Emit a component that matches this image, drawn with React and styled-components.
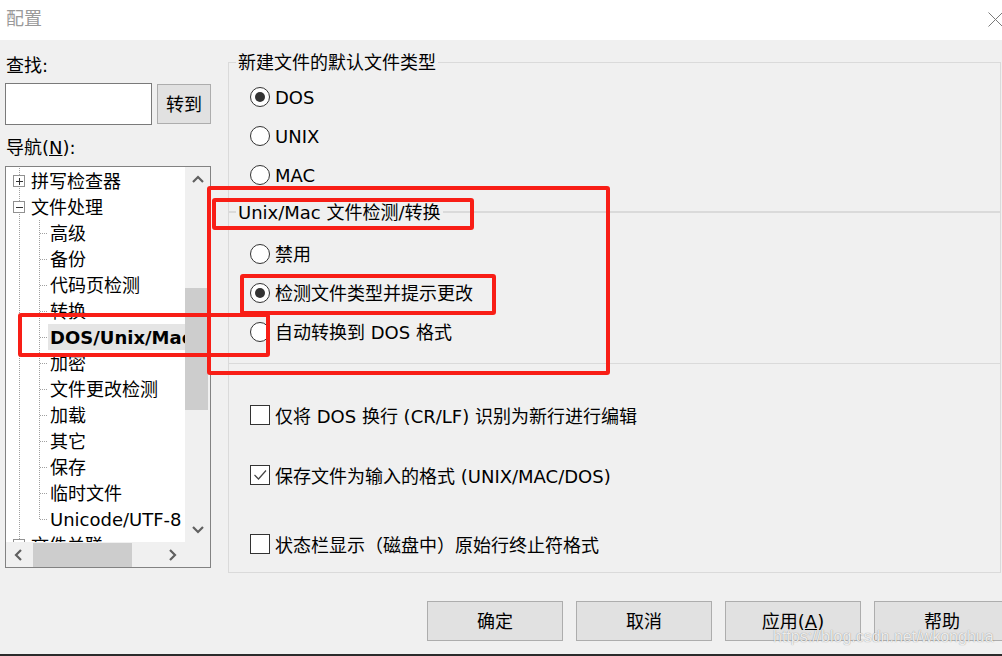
import React from 'react'
import styled, { createGlobalStyle } from 'styled-components'

const GlobalStyle = createGlobalStyle`
  html, body {
    margin: 0;
    padding: 0;
    background: #f0f0f0;
    overflow: hidden;
  }
  body {
    font-family: "DejaVu Sans", "Noto Sans CJK SC", sans-serif;
  }
`

const treeItems = [
    { label: '拼写检查器', level: 1, expander: '+' },
    { label: '文件处理', level: 1, expander: '-' },
    { label: '高级', level: 2 },
    { label: '备份', level: 2 },
    { label: '代码页检测', level: 2 },
    { label: '转换', level: 2 },
    { label: 'DOS/Unix/Mac', level: 2, selected: true },
    { label: '加密', level: 2 },
    { label: '文件更改检测', level: 2 },
    { label: '加载', level: 2 },
    { label: '其它', level: 2 },
    { label: '保存', level: 2 },
    { label: '临时文件', level: 2 },
    { label: 'Unicode/UTF-8', level: 2, last: true },
    { label: '文件关联', level: 1, expander: '+' },
]

const marks = [
    { x: 207, y: 186, w: 403, h: 189 },
    { x: 212, y: 198, w: 262, h: 32 },
    { x: 240, y: 274, w: 256, h: 41 },
    { x: 18, y: 313, w: 252, h: 44 },
]

function Chevron({ dir }) {
    const paths = {
        up: 'M1 7 L6 2 L11 7',
        down: 'M1 2 L6 7 L11 2',
        left: 'M7 1 L2 6 L7 11',
        right: 'M2 1 L7 6 L2 11',
    }
    const horiz = dir === 'left' || dir === 'right'
    return (
        <svg width={horiz ? 9 : 12} height={horiz ? 12 : 9} viewBox={horiz ? '0 0 9 12' : '0 0 12 9'}>
            <path d={paths[dir]} fill="none" stroke="#606060" strokeWidth="2.2" />
        </svg>
    )
}

function Guide({ level, last, expander }) {
    const dot = { stroke: '#a0a0a0', strokeWidth: 1, strokeDasharray: '1 1', shapeRendering: 'crispEdges' }
    if (level === 1) {
        return (
            <svg width="23" height="26" style={{ flexShrink: 0 }}>
                <line x1="13.5" y1="0" x2="13.5" y2="26" {...dot} />
                <rect x="7.5" y="7.5" width="11" height="11" fill="#fff" stroke="#919191" shapeRendering="crispEdges" />
                <line x1="10" y1="13.5" x2="17" y2="13.5" stroke="#333" shapeRendering="crispEdges" />
                {expander === '+' && (
                    <line x1="13.5" y1="10" x2="13.5" y2="17" stroke="#333" shapeRendering="crispEdges" />
                )}
            </svg>
        )
    }
    return (
        <svg width="42" height="26" style={{ flexShrink: 0 }}>
            <line x1="13.5" y1="0" x2="13.5" y2="26" {...dot} />
            <line x1="33.5" y1="0" x2="33.5" y2={last ? 13 : 26} {...dot} />
            <line x1="34" y1="13.5" x2="42" y2="13.5" {...dot} />
        </svg>
    )
}

function Radio({ checked, children }) {
    return (
        <OptionRow $h={39}>
            <RadioCircle>{checked && <RadioDot />}</RadioCircle>
            <OptionText>{children}</OptionText>
        </OptionRow>
    )
}

function Check({ checked, top, children }) {
    return (
        <OptionRow $h={30} $top={top}>
            <CheckBox>
                {checked && (
                    <svg width="18" height="18" viewBox="0 0 18 18">
                        <path d="M3.5 9 L7.5 13 L15 4.5" fill="none" stroke="#444" strokeWidth="1.2" />
                    </svg>
                )}
            </CheckBox>
            <OptionText>{children}</OptionText>
        </OptionRow>
    )
}

function App() {
    return (
        <Window>
            <GlobalStyle />
            <TitleBar>
                <span>配置</span>
                <svg width="15" height="15" viewBox="0 0 15 15">
                    <path d="M0.5 0.5 L14.5 14.5 M14.5 0.5 L0.5 14.5" stroke="#7a7a7a" strokeWidth="1" />
                </svg>
            </TitleBar>

            <Main>
                <LeftCol>
                    <FieldLabel>查找:</FieldLabel>
                    <SearchRow>
                        <SearchInput />
                        <Button $w={54} $h={40}>转到</Button>
                    </SearchRow>
                    <FieldLabel $top={9}>导航(<u>N</u>):</FieldLabel>

                    <Tree>
                        <TreeContent>
                            {treeItems.map((item) => (
                                <TreeRow key={item.label}>
                                    <Guide level={item.level} last={item.last} expander={item.expander} />
                                    <TreeLabel $selected={item.selected}>{item.label}</TreeLabel>
                                </TreeRow>
                            ))}
                        </TreeContent>
                        <VScroll>
                            <ArrowBox><Chevron dir="up" /></ArrowBox>
                            <VTrack>
                                <VThumb />
                            </VTrack>
                            <ArrowBox><Chevron dir="down" /></ArrowBox>
                        </VScroll>
                        <HScroll>
                            <ArrowBox><Chevron dir="left" /></ArrowBox>
                            <HTrack>
                                <HThumb />
                            </HTrack>
                            <ArrowBox><Chevron dir="right" /></ArrowBox>
                        </HScroll>
                        <Corner />
                    </Tree>
                </LeftCol>

                <Panel>
                    <Section $h={149} $pad={14} $bottom>
                        <Legend>新建文件的默认文件类型</Legend>
                        <Radio checked>DOS</Radio>
                        <Radio>UNIX</Radio>
                        <Radio>MAC</Radio>
                    </Section>
                    <Section $h={151} $pad={21} $topLine>
                        <Legend>Unix/Mac 文件检测/转换</Legend>
                        <Radio>禁用</Radio>
                        <Radio checked>检测文件类型并提示更改</Radio>
                        <Radio>自动转换到 DOS 格式</Radio>
                    </Section>
                    <Section $grow $topLine>
                        <Check top={36}>仅将 DOS 换行 (CR/LF) 识别为新行进行编辑</Check>
                        <Check checked top={30}>保存文件为输入的格式 (UNIX/MAC/DOS)</Check>
                        <Check top={39}>状态栏显示（磁盘中）原始行终止符格式</Check>
                    </Section>
                </Panel>
            </Main>

            <Footer>
                <Button $w={136} $h={40}>确定</Button>
                <Button $w={136} $h={40}>取消</Button>
                <Button $w={136} $h={40}>应用(<u>A</u>)</Button>
                <Button $w={136} $h={40}>帮助</Button>
            </Footer>
            <BottomEdge />

            <Watermark>https://blog.csdn.net/wkonghua</Watermark>
            {marks.map((m, i) => (
                <Mark key={i} $x={m.x} $y={m.y} $w={m.w} $h={m.h} />
            ))}
        </Window>
    )
}

const Window = styled.div`
    position: relative;
    width: 1002px;
    height: 656px;
    overflow: hidden;
    display: flex;
    flex-direction: column;
    background: #f0f0f0;
    color: #000;
    font-size: 18px;
    line-height: 24px;
`

const TitleBar = styled.div`
    height: 40px;
    flex-shrink: 0;
    box-sizing: border-box;
    background: #fff;
    display: flex;
    align-items: center;
    justify-content: space-between;
    padding: 0 0 2px 6px;
    color: #9a9a9a;
    svg {
        margin-right: -1px;
    }
`

const Main = styled.div`
    height: 540px;
    flex-shrink: 0;
    display: flex;
    align-items: flex-start;
`

const LeftCol = styled.div`
    width: 207px;
    margin-left: 5px;
    padding-top: 12px;
    display: flex;
    flex-direction: column;
`

const FieldLabel = styled.div`
    height: 24px;
    padding: 2px 0 0 1px;
    margin-top: ${p => p.$top || 0}px;
    white-space: nowrap;
`

const SearchRow = styled.div`
    margin-top: 5px;
    display: flex;
    align-items: center;
    gap: 5px;
`

const SearchInput = styled.div`
    width: 147px;
    height: 42px;
    box-sizing: border-box;
    background: #fff;
    border: 1px solid #7a7a7a;
`

const Button = styled.div`
    width: ${p => p.$w}px;
    height: ${p => p.$h}px;
    flex-shrink: 0;
    box-sizing: border-box;
    padding-top: 2px;
    background: #e1e1e1;
    border: 1px solid #adadad;
    display: flex;
    align-items: center;
    justify-content: center;
    white-space: nowrap;
`

const Tree = styled.div`
    margin-top: 6px;
    width: 206px;
    height: 402px;
    box-sizing: border-box;
    border: 1px solid #828282;
    display: grid;
    grid-template-columns: 179px 25px;
    grid-template-rows: 375px 25px;
`

const TreeContent = styled.div`
    background: #fff;
    overflow: hidden;
    padding-top: 1px;
    box-sizing: border-box;
`

const TreeRow = styled.div`
    height: 26px;
    display: flex;
    align-items: stretch;
    white-space: nowrap;
`

const TreeLabel = styled.span`
    flex: 1 0 auto;
    display: flex;
    align-items: center;
    padding: 2px 2px 0;
    line-height: 24px;
    font-weight: ${p => (p.$selected ? 700 : 400)};
    background: ${p => (p.$selected ? '#e5e5e5' : 'transparent')};
`

const VScroll = styled.div`
    background: #f0f0f0;
    display: flex;
    flex-direction: column;
`

const ArrowBox = styled.div`
    flex: 0 0 25px;
    height: 25px;
    display: flex;
    align-items: center;
    justify-content: center;
`

const VTrack = styled.div`
    flex: 1;
    padding-top: 96px;
    box-sizing: border-box;
`

const VThumb = styled.div`
    width: 23px;
    height: 122px;
    background: #cdcdcd;
`

const HScroll = styled.div`
    background: #f0f0f0;
    display: flex;
    align-items: stretch;
`

const HTrack = styled.div`
    flex: 1;
    padding-left: 2px;
    display: flex;
    align-items: center;
`

const HThumb = styled.div`
    width: 99px;
    height: 24px;
    background: #cdcdcd;
`

const Corner = styled.div`
    background: #f0f0f0;
`

const Panel = styled.div`
    margin-left: 16px;
    margin-top: 22px;
    width: 773px;
    height: 511px;
    box-sizing: border-box;
    border: 1px solid #dadada;
    display: flex;
    flex-direction: column;
`

const Section = styled.div`
    position: relative;
    box-sizing: border-box;
    ${p => (p.$grow ? 'flex: 1;' : `height: ${p.$h}px; flex-shrink: 0;`)}
    padding-top: ${p => p.$pad || 0}px;
    border-top: ${p => (p.$topLine ? '1px solid #dadada' : 'none')};
    border-bottom: ${p => (p.$bottom ? '1px solid #dadada' : 'none')};
`

const Legend = styled.span`
    position: absolute;
    top: -12px;
    left: 7px;
    padding: 0 2px;
    background: #f0f0f0;
    white-space: nowrap;
`

const OptionRow = styled.div`
    height: ${p => p.$h}px;
    margin-top: ${p => p.$top || 0}px;
    padding-left: 21px;
    display: flex;
    align-items: center;
    gap: 5px;
    white-space: nowrap;
`

const OptionText = styled.span`
    padding-top: 3px;
`

const RadioCircle = styled.span`
    width: 20px;
    height: 20px;
    flex-shrink: 0;
    box-sizing: border-box;
    border: 1px solid #333;
    border-radius: 50%;
    background: #fff;
    display: flex;
    align-items: center;
    justify-content: center;
`

const RadioDot = styled.span`
    width: 10px;
    height: 10px;
    border-radius: 50%;
    background: #333;
`

const CheckBox = styled.span`
    width: 20px;
    height: 20px;
    flex-shrink: 0;
    box-sizing: border-box;
    border: 1px solid #333;
    background: #fff;
    display: flex;
    align-items: center;
    justify-content: center;
`

const Footer = styled.div`
    height: 74px;
    flex-shrink: 0;
    box-sizing: border-box;
    padding: 21px 0 0 427px;
    display: flex;
    align-items: flex-start;
    gap: 13px;
`

const BottomEdge = styled.div`
    height: 2px;
    flex-shrink: 0;
    background: #2b2b2b;
`

const Watermark = styled.div`
    position: absolute;
    left: 773px;
    top: 627px;
    font-family: "Liberation Sans", Arial, sans-serif;
    font-size: 16px;
    line-height: 20px;
    color: rgba(255, 255, 255, 0.85);
    text-shadow: 0 0 1px rgba(0, 0, 0, 0.45);
    white-space: nowrap;
`

const Mark = styled.div`
    position: absolute;
    left: ${p => p.$x}px;
    top: ${p => p.$y}px;
    width: ${p => p.$w}px;
    height: ${p => p.$h}px;
    box-sizing: border-box;
    border: 4px solid #f81e16;
    border-radius: 3px;
    pointer-events: none;
`

export default App
